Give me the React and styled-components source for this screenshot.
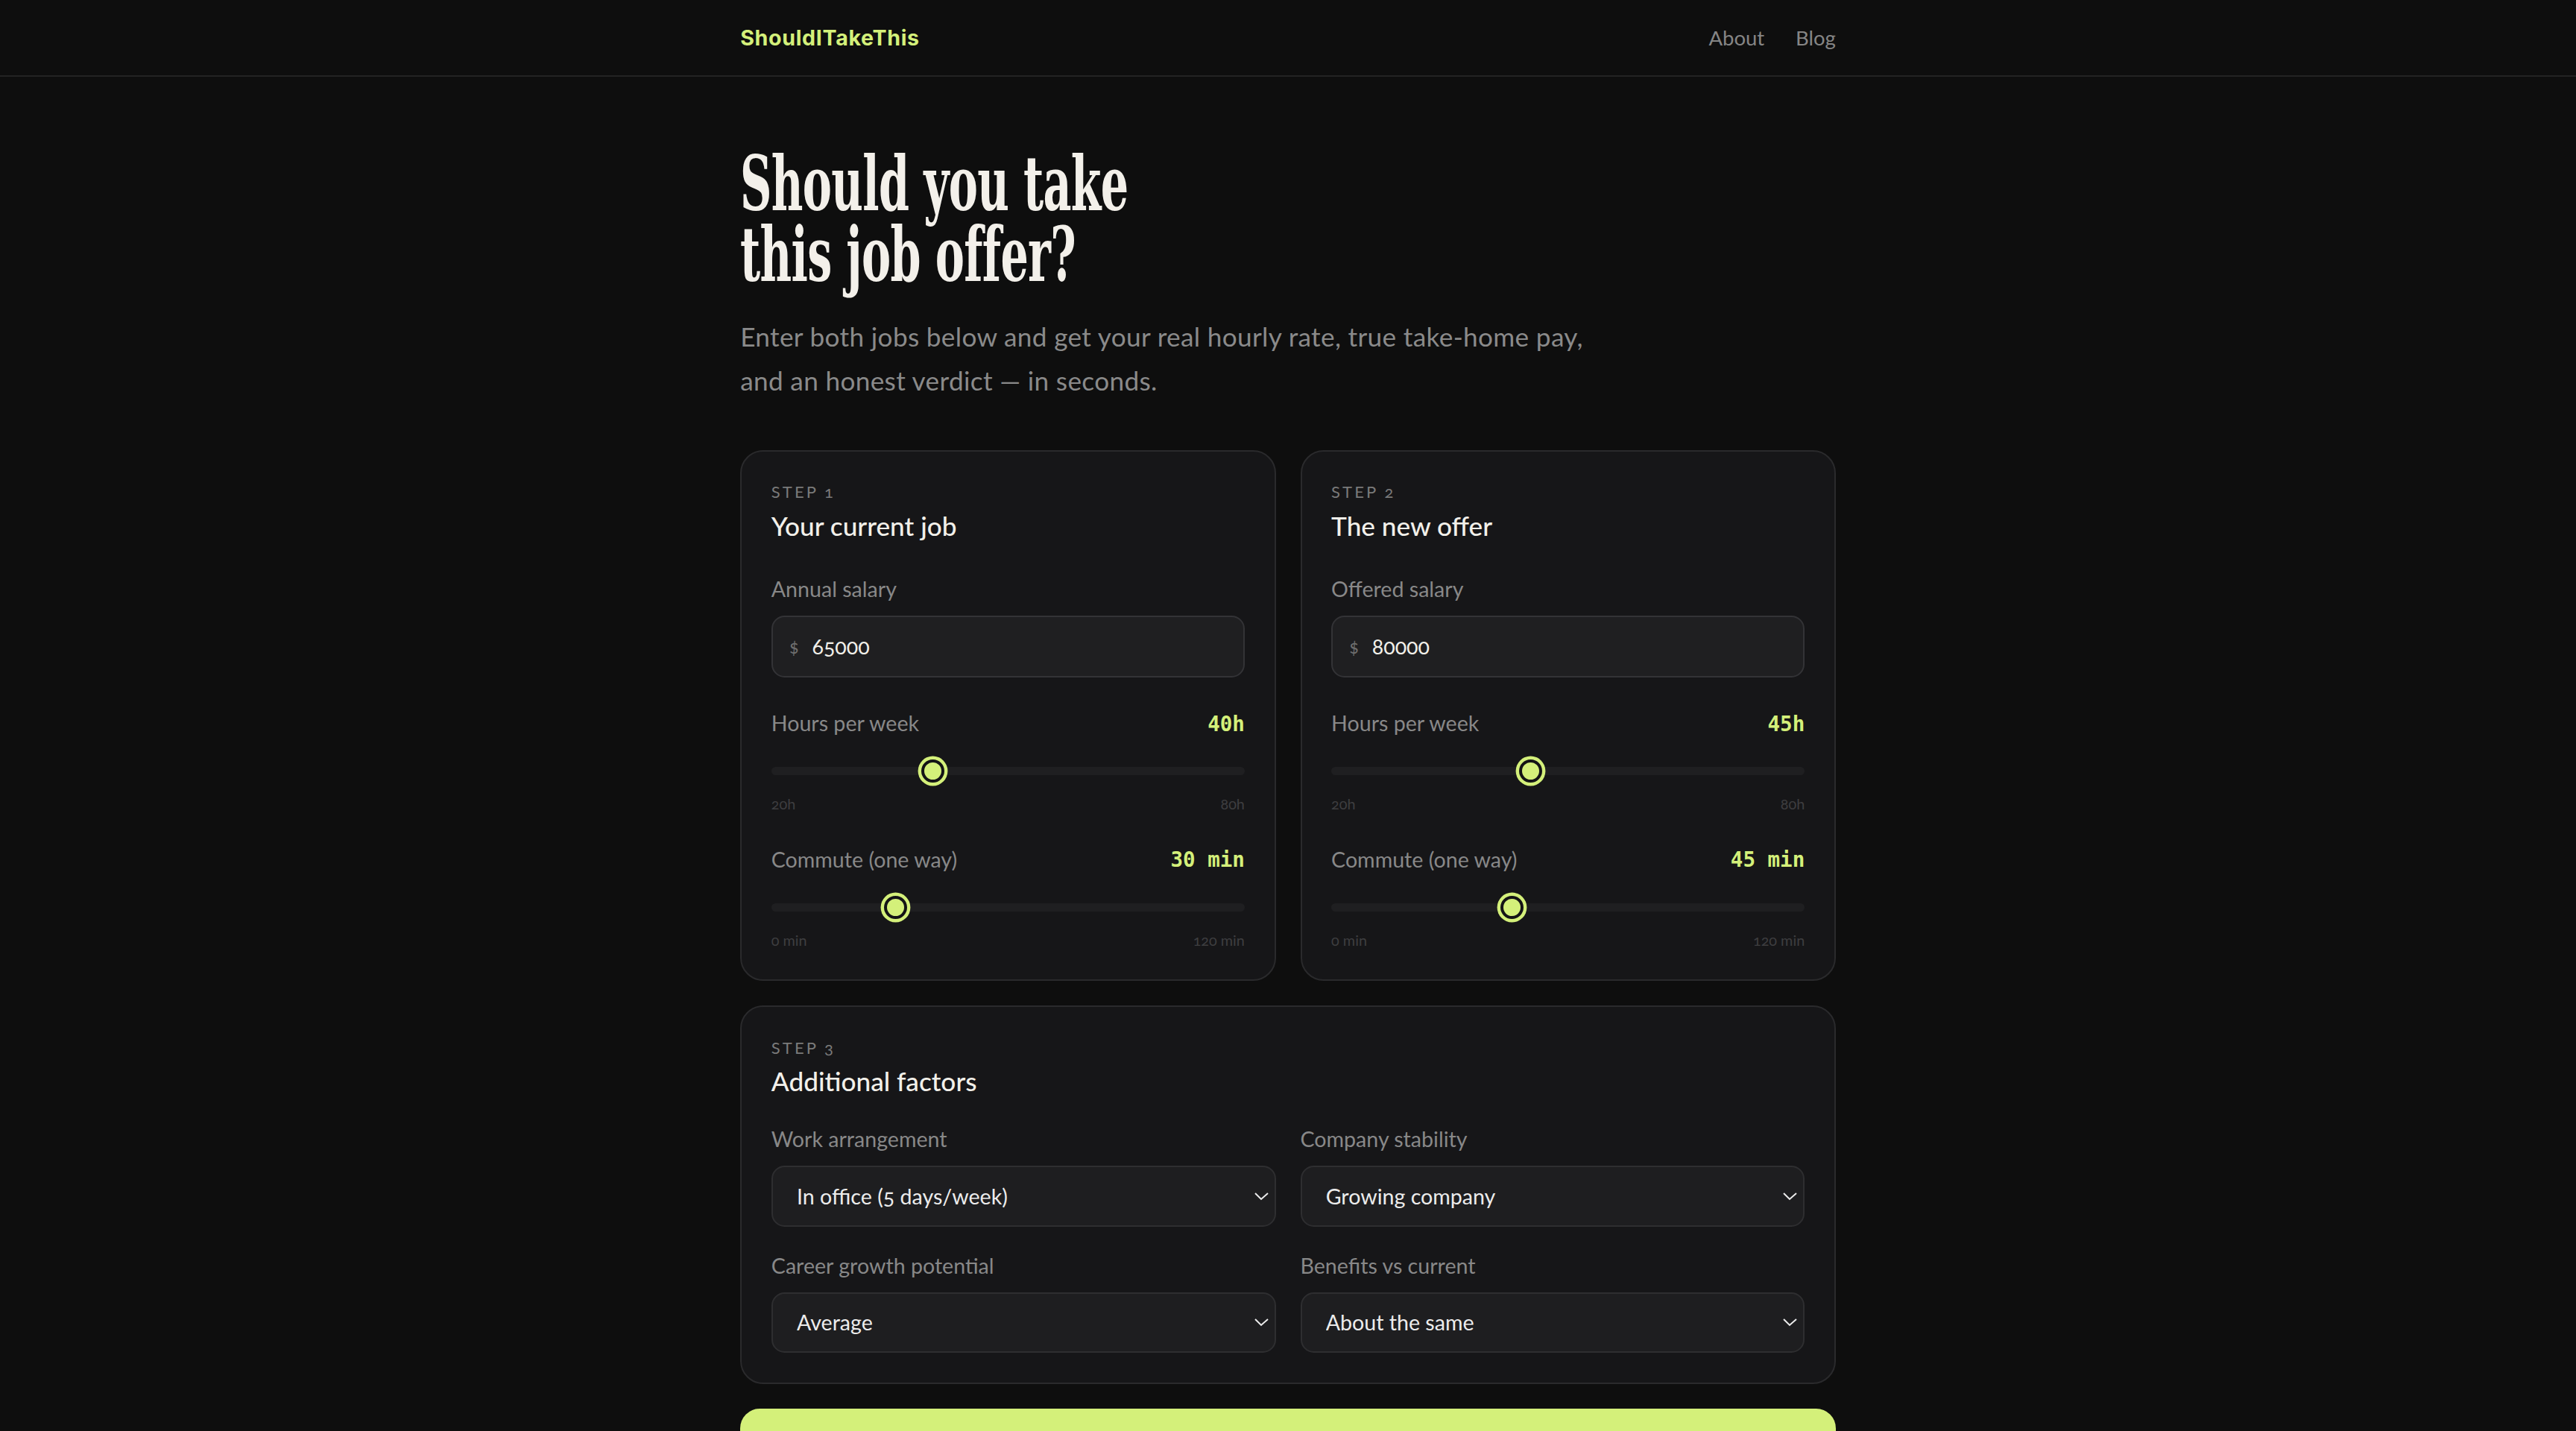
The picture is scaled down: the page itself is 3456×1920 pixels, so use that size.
import React from 'react';
import styled, { createGlobalStyle } from 'styled-components';

const lime = '#d4f07a';

const GlobalStyle = createGlobalStyle`
  html, body {
    margin: 0;
    background: #0e0e0e;
  }
  body {
    font-family: Lato, "Noto Sans", sans-serif;
    color: #f2f0ea;
  }
  *, *::before, *::after {
    box-sizing: border-box;
  }
`;

const Page = styled.div`
  zoom: 2.2;
  font-variant-numeric: oldstyle-nums;
`;

const NavBar = styled.header`
  height: 47px;
  border-bottom: 1px solid #232323;
`;

const NavInner = styled.div`
  width: 668px;
  height: 100%;
  margin: 0 auto;
  display: flex;
  align-items: center;
  justify-content: space-between;
`;

const Logo = styled.a`
  font-family: Inter, sans-serif;
  font-weight: 700;
  font-size: 13px;
  letter-spacing: 0.3px;
  color: ${lime};
  text-decoration: none;
`;

const NavLinks = styled.nav`
  display: flex;
  gap: 19px;
`;

const NavLink = styled.a`
  font-size: 12.5px;
  color: #858585;
  text-decoration: none;
`;

const Main = styled.main`
  width: 668px;
  margin: 0 auto;
  padding: 44px 0 60px;
`;

const Headline = styled.h1`
  margin: 0;
  font-family: "DejaVu Serif", "Liberation Serif", serif;
  font-weight: 700;
  font-size: 46px;
  line-height: 43px;
  letter-spacing: -0.5px;
  color: #f3f0ea;
  transform: scaleX(0.58);
  transform-origin: left top;
`;

const HeadLine = styled.span`
  display: block;
`;

const Lead = styled.p`
  margin: 15px 0 0;
  max-width: 535px;
  font-size: 16px;
  line-height: 26.7px;
  letter-spacing: 0.15px;
  color: #8a8a8a;
`;

const Form = styled.form`
  margin-top: 29px;
  display: flex;
  flex-direction: column;
  gap: 15px;
`;

const StepGrid = styled.div`
  display: grid;
  grid-template-columns: 1fr 1fr;
  gap: 15px;
`;

const Card = styled.section`
  background: #161618;
  border: 1px solid #2a2a2c;
  border-radius: 14px;
  padding: 18px 18px 18px;
`;

const StepTag = styled.div`
  margin-bottom: 3px;
  font-size: 10px;
  line-height: 14px;
  letter-spacing: 0.14em;
  text-transform: uppercase;
  color: #7a7a7a;
`;

const CardTitle = styled.h2`
  margin: 0;
  font-size: 16px;
  line-height: 20px;
  font-weight: 500;
  color: #f2f0ea;
`;

const Field = styled.div`
  margin-top: ${p => p.$gap}px;
`;

const FieldLabel = styled.span`
  display: block;
  font-size: 13px;
  line-height: 18px;
  color: #888888;
`;

const MoneyBox = styled.label`
  margin-top: 7px;
  height: 38px;
  padding: 0 10px;
  display: flex;
  align-items: center;
  gap: 8px;
  background: #1f1f21;
  border: 1px solid #333336;
  border-radius: 8px;
`;

const Currency = styled.span`
  font-size: 11px;
  color: #6e6e6e;
`;

const MoneyInput = styled.input`
  flex: 1;
  min-width: 0;
  padding: 0;
  border: 0;
  outline: none;
  background: transparent;
  font: inherit;
  font-size: 13px;
  color: #f2f0ea;
`;

const LabelRow = styled.div`
  height: 18px;
  display: flex;
  align-items: center;
  justify-content: space-between;
`;

const Reading = styled.span`
  font-family: "DejaVu Sans Mono", "Liberation Mono", monospace;
  font-weight: 700;
  font-size: 12.5px;
  color: ${lime};
`;

const Range = styled.input.attrs({ type: 'range' })`
  -webkit-appearance: none;
  appearance: none;
  display: block;
  width: 100%;
  height: 18px;
  margin: 11px 0 0;
  background: transparent;

  &::-webkit-slider-runnable-track {
    height: 5px;
    border-radius: 3px;
    background: #1f1f21;
  }

  &::-webkit-slider-thumb {
    -webkit-appearance: none;
    width: 14px;
    height: 14px;
    margin-top: -4.5px;
    border-radius: 50%;
    background: ${lime};
    border: 2px solid #141416;
    box-shadow: 0 0 0 2px ${lime};
  }
`;

const Ticks = styled.div`
  margin-top: 5px;
  display: flex;
  justify-content: space-between;
  font-size: 9px;
  line-height: 12px;
  color: #3e3e40;
`;

const FactorGrid = styled.div`
  margin-top: 17px;
  display: grid;
  grid-template-columns: 1fr 1fr;
  column-gap: 15px;
  row-gap: 15px;
`;

const Select = styled.select`
  display: block;
  width: 100%;
  height: 37px;
  margin-top: 7px;
  padding: 0 11px;
  background: #1e1e20;
  border: 1px solid #2e2e30;
  border-radius: 8px;
  font: inherit;
  font-size: 13px;
  color: #ececec;
`;

const CompareButton = styled.button`
  display: block;
  width: 100%;
  height: 54px;
  border: 0;
  border-radius: 12px;
  background: ${lime};
  font: inherit;
  font-size: 15px;
  font-weight: 700;
  color: #0e0e0e;
`;

function SliderField({ gap, label, reading, min, max, value, minLabel, maxLabel }) {
  return (
    <Field $gap={gap}>
      <LabelRow>
        <FieldLabel>{label}</FieldLabel>
        <Reading>{reading}</Reading>
      </LabelRow>
      <Range min={min} max={max} defaultValue={value} />
      <Ticks>
        <span>{minLabel}</span>
        <span>{maxLabel}</span>
      </Ticks>
    </Field>
  );
}

function JobCard({ step, title, salaryLabel, salary, hours, commute }) {
  return (
    <Card>
      <StepTag>Step {step}</StepTag>
      <CardTitle>{title}</CardTitle>
      <Field $gap={20}>
        <FieldLabel>{salaryLabel}</FieldLabel>
        <MoneyBox>
          <Currency>$</Currency>
          <MoneyInput type="text" defaultValue={salary} />
        </MoneyBox>
      </Field>
      <SliderField
        gap={19}
        label="Hours per week"
        reading={`${hours}h`}
        min={20}
        max={80}
        value={hours}
        minLabel="20h"
        maxLabel="80h"
      />
      <SliderField
        gap={19}
        label="Commute (one way)"
        reading={`${commute} min`}
        min={0}
        max={120}
        value={commute}
        minLabel="0 min"
        maxLabel="120 min"
      />
    </Card>
  );
}

function SelectField({ label, options }) {
  return (
    <div>
      <FieldLabel>{label}</FieldLabel>
      <Select defaultValue={options[0]}>
        {options.map(o => (
          <option key={o}>{o}</option>
        ))}
      </Select>
    </div>
  );
}

const factors = [
  { label: 'Work arrangement', options: ['In office (5 days/week)', 'Hybrid (2–3 days/week)', 'Fully remote'] },
  { label: 'Company stability', options: ['Growing company', 'Stable / established', 'Early-stage startup'] },
  { label: 'Career growth potential', options: ['Average', 'Strong', 'Limited'] },
  { label: 'Benefits vs current', options: ['About the same', 'Better', 'Worse'] },
];

export default function App() {
  return (
    <Page>
      <GlobalStyle />
      <NavBar>
        <NavInner>
          <Logo href="#">ShouldITakeThis</Logo>
          <NavLinks>
            <NavLink href="#">About</NavLink>
            <NavLink href="#">Blog</NavLink>
          </NavLinks>
        </NavInner>
      </NavBar>
      <Main>
        <Headline>
          <HeadLine>Should you take</HeadLine>
          <HeadLine>this job offer?</HeadLine>
        </Headline>
        <Lead>
          Enter both jobs below and get your real hourly rate, true take-home pay, and an honest verdict — in seconds.
        </Lead>
        <Form onSubmit={e => e.preventDefault()}>
          <StepGrid>
            <JobCard step={1} title="Your current job" salaryLabel="Annual salary" salary="65000" hours={40} commute={30} />
            <JobCard step={2} title="The new offer" salaryLabel="Offered salary" salary="80000" hours={45} commute={45} />
          </StepGrid>
          <Card>
            <StepTag>Step 3</StepTag>
            <CardTitle>Additional factors</CardTitle>
            <FactorGrid>
              {factors.map(f => (
                <SelectField key={f.label} label={f.label} options={f.options} />
              ))}
            </FactorGrid>
          </Card>
          <CompareButton type="submit">Get my verdict</CompareButton>
        </Form>
      </Main>
    </Page>
  );
}
